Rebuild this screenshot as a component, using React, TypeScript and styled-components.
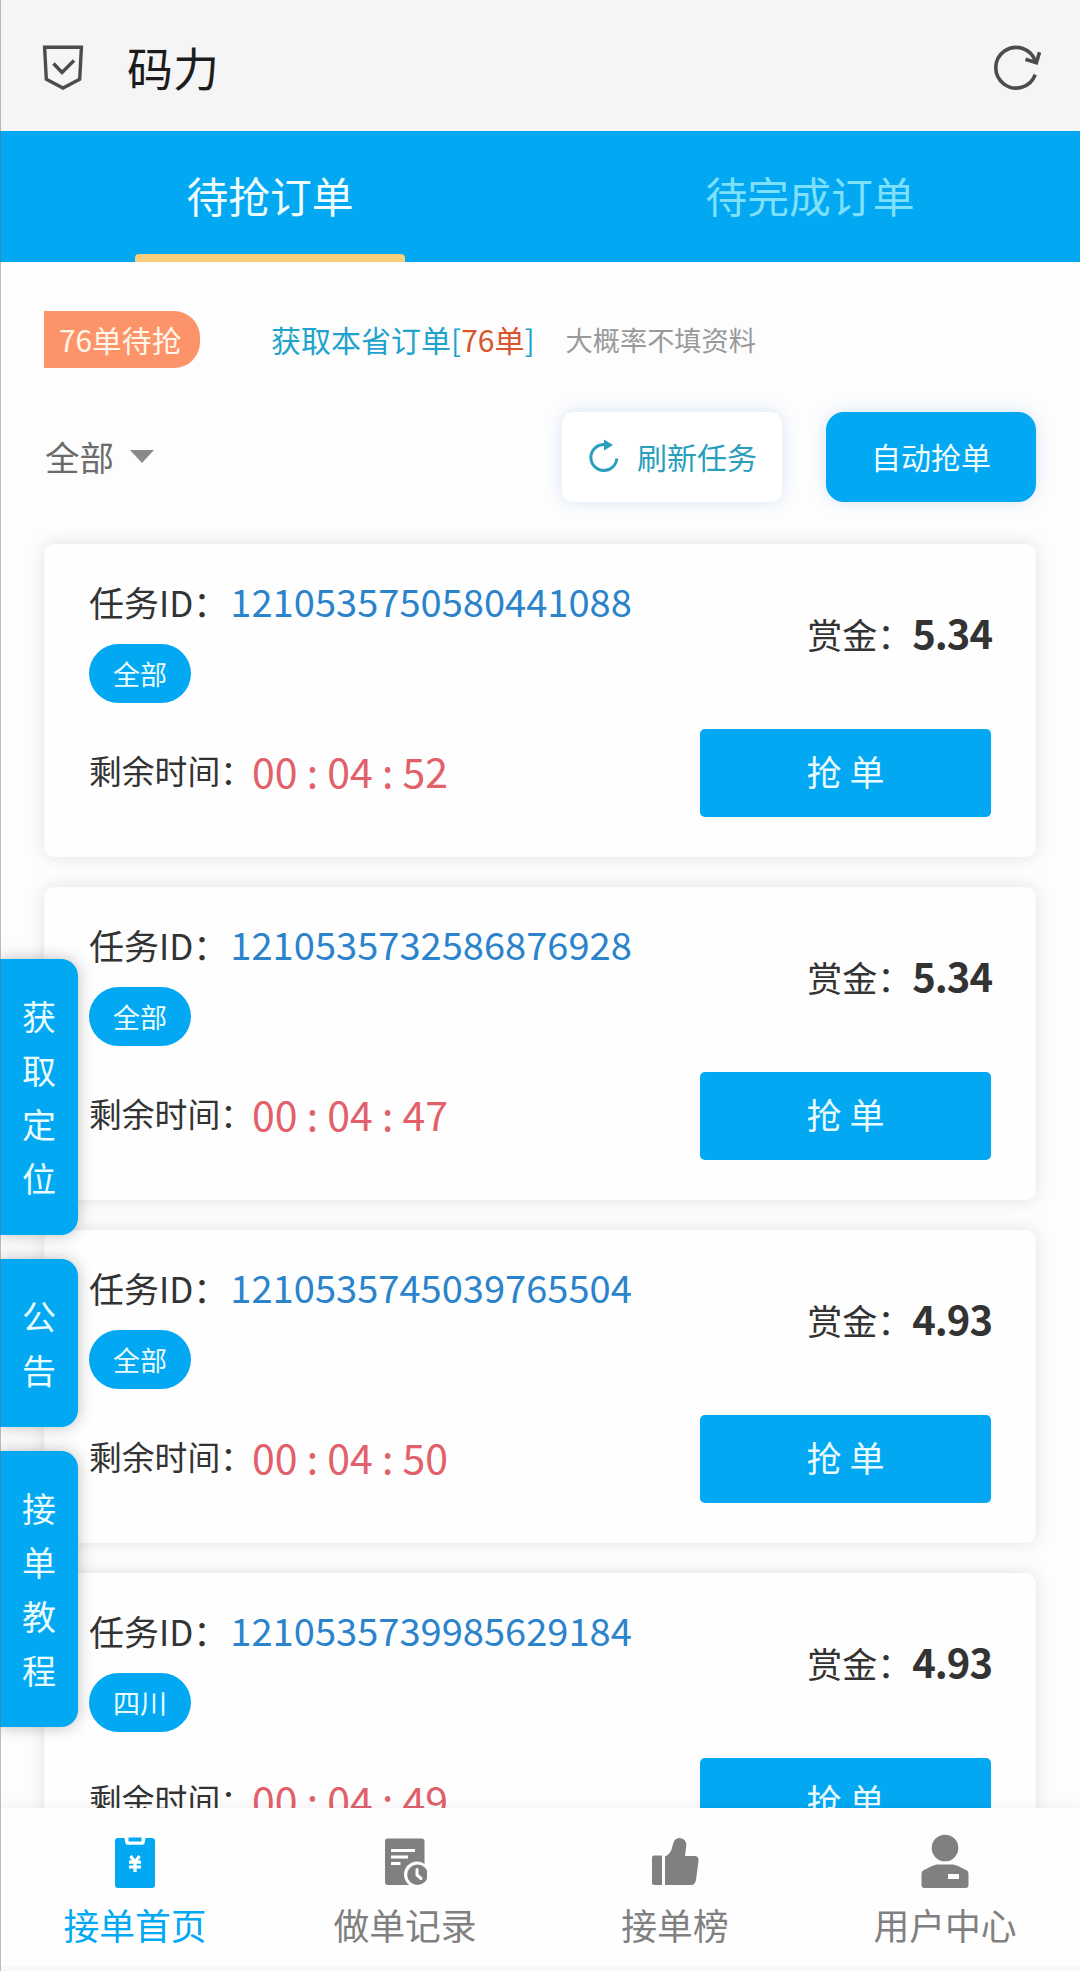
import React from "react";
import styled, { createGlobalStyle } from "styled-components";

const BLUE = "#03a8f3";

const Global = createGlobalStyle`
  *, *::before, *::after { box-sizing: border-box; }
  html, body { margin: 0; padding: 0; }
  body {
    font-family: "Noto Sans CJK SC", "Noto Sans", sans-serif;
    color: #333;
    background: #fdfdfd;
  }
  button { font: inherit; border: 0; margin: 0; padding: 0; cursor: pointer; }
`;

const Screen = styled.div`
  position: relative;
  display: flex;
  flex-direction: column;
  width: 1080px;
  height: 1971px;
  overflow: hidden;
  background: #fdfdfd;

  &::after {
    content: "";
    position: absolute;
    inset: 0 auto 0 0;
    width: 1px;
    background: rgba(110, 110, 110, 0.45);
    z-index: 5;
  }
`;

const Header = styled.header`
  flex: none;
  display: flex;
  align-items: center;
  height: 131px;
  padding: 5px 37px 0 42px;
  background: #f5f5f5;
`;

const Title = styled.h1`
  flex: 1;
  margin: 0 0 5px 43px;
  font-size: 46px;
  line-height: 60px;
  font-weight: 400;
  color: #1c1c1c;
`;

const Tabs = styled.nav`
  flex: none;
  display: flex;
  height: 131px;
  background: ${BLUE};
`;

const Tab = styled.div<{ $active?: boolean }>`
  flex: 1;
  display: flex;
  flex-direction: column;
  align-items: center;
  padding-top: 6px;
  font-size: 41.8px;
  line-height: 117px;
  color: ${(p) => (p.$active ? "#f0fdff" : "#7fe0fb")};

  &::after {
    content: "";
    width: 270px;
    height: 8px;
    border-radius: 4px 4px 0 0;
    background: ${(p) => (p.$active ? "#f9cf7f" : "transparent")};
  }
`;

const Content = styled.main`
  flex: 1;
  min-height: 0;
  overflow: hidden;
  padding: 48px 44px 0;
`;

const Summary = styled.div`
  display: flex;
  align-items: center;
  height: 58px;
`;

const Pending = styled.span`
  width: 156px;
  height: 57px;
  padding-left: 15px;
  border-radius: 0 26px 26px 0;
  background: #fd9469;
  color: #fff6ea;
  font-size: 29.8px;
  line-height: 56px;
  white-space: nowrap;
`;

const Province = styled.span`
  margin-left: 71px;
  font-size: 30px;
  color: #1fa3cd;
  white-space: nowrap;

  em {
    font-style: normal;
    color: #d9562b;
  }
`;

const Hint = styled.span`
  margin-left: 31px;
  font-size: 27.2px;
  color: #999;
  white-space: nowrap;
`;

const Toolbar = styled.div`
  display: flex;
  align-items: center;
  height: 90px;
  margin-top: 44px;
`;

const Filter = styled.div`
  flex: 1;
  display: flex;
  align-items: center;
  gap: 16px;
  padding: 0 0 3px 1px;
  font-size: 34.5px;
  line-height: 50px;
  color: #6b6b6b;
`;

const Caret = styled.i`
  width: 0;
  height: 0;
  margin-top: 2px;
  border: 12px solid transparent;
  border-top: 13px solid #8a8a8a;
  border-bottom: 0;
`;

const ToolButton = styled.button<{ $primary?: boolean }>`
  display: flex;
  align-items: center;
  justify-content: center;
  gap: 18px;
  width: ${(p) => (p.$primary ? 210 : 220)}px;
  height: 90px;
  padding-bottom: 2px;
  padding-left: ${(p) => (p.$primary ? 0 : 2)}px;
  border-radius: ${(p) => (p.$primary ? 18 : 12)}px;
  background: ${(p) => (p.$primary ? BLUE : "#fff")};
  color: ${(p) => (p.$primary ? "#f0fdff" : "#2a9fbd")};
  font-size: 30px;
  box-shadow: 0 0 16px rgba(60, 130, 230, 0.2);

  & + & { margin-left: 44px; }
`;

const List = styled.section`
  display: flex;
  flex-direction: column;
  gap: 30px;
  margin-top: 42px;
`;

const Card = styled.article`
  flex: none;
  display: flex;
  justify-content: space-between;
  height: 313px;
  padding: 28px 45px 0;
  border-radius: 10px;
  background: #fefefe;
  box-shadow: 0 0 18px rgba(0, 0, 0, 0.11);
`;

const Info = styled.div`
  display: flex;
  flex-direction: column;
  align-items: flex-start;
`;

const IdRow = styled.div`
  display: flex;
  align-items: baseline;
  height: 56px;
  font-size: 35px;
  line-height: 57px;
  white-space: nowrap;

  b {
    margin-left: 2px;
    font-weight: 400;
    font-size: 38.1px;
    color: #2b84cb;
  }
`;

const Area = styled.span`
  width: 102px;
  height: 59px;
  margin-top: 16px;
  border-radius: 30px;
  background: ${BLUE};
  color: #e9fcff;
  font-size: 27px;
  line-height: 60px;
  text-align: center;
`;

const TimeRow = styled.div`
  display: flex;
  align-items: center;
  height: 50px;
  margin-top: 42px;
  font-size: 32.8px;
  line-height: 48px;
  white-space: nowrap;

  b {
    margin-left: -1px;
    font-weight: 400;
    font-size: 41px;
    line-height: 50px;
    color: #e2606a;
  }
`;

const Action = styled.div`
  display: flex;
  flex-direction: column;
  align-items: flex-end;
`;

const Price = styled.div`
  display: flex;
  align-items: baseline;
  height: 60px;
  margin: 30px -1px 0 0;
  font-size: 35px;
  line-height: 60px;
  white-space: nowrap;

  b {
    font-weight: 700;
    font-size: 40px;
    letter-spacing: -1px;
  }
`;

const Grab = styled.button`
  width: 291px;
  height: 88px;
  margin-top: 67px;
  border-radius: 5px;
  background: ${BLUE};
  color: #e9fcff;
  font-size: 35px;
  line-height: 83px;
  padding-bottom: 5px;
`;

const Dock = styled.aside`
  position: absolute;
  left: 0;
  top: 959px;
  display: flex;
  flex-direction: column;
  gap: 24px;
`;

const DockItem = styled.div`
  display: flex;
  flex-direction: column;
  align-items: center;
  width: 78px;
  padding: 30px 0;
  border-radius: 0 17px 17px 0;
  background: ${BLUE};
  color: #e9fcff;
  font-size: 34px;
  line-height: 54px;
  box-shadow: 0 0 16px rgba(0, 0, 0, 0.26);
`;

const BottomNav = styled.footer`
  flex: none;
  display: flex;
  height: 163px;
  background: #fefefe;
  box-shadow: 0 0 12px rgba(0, 0, 0, 0.07);
  border-bottom: 5px solid #f8f8f8;
  z-index: 1;
`;

const NavItem = styled.div<{ $active?: boolean }>`
  flex: 1;
  display: flex;
  flex-direction: column;
  align-items: center;
  padding-top: 24px;
  color: ${(p) => (p.$active ? BLUE : "#808080")};
  font-size: 35.8px;
  line-height: 50px;

  svg { display: block; margin-bottom: 9px; }
`;

const ShieldIcon = () => (
  <svg width="42" height="46" viewBox="0 0 42 46" fill="none" stroke="#4c4c4c" strokeWidth="3.4">
    <path d="M2.6 2.3H39.4L37.7 34.2L21 43L4.3 34.2Z" />
    <path d="M11.5 18.5L20 27.5L32 15.5" />
  </svg>
);

const ReloadIcon = () => (
  <svg width="50" height="48" viewBox="0 0 50 48" fill="none" stroke="#4c4c4c" strokeWidth="3.6">
    <path d="M42.2 30.6A20.3 20.3 0 1 1 42.5 17.8" />
    <path d="M32.5 15.2L43.4 18.8L46.5 8.3" />
  </svg>
);

const RefreshIcon = () => (
  <svg width="30" height="34" viewBox="0 0 30 34" fill="none" stroke="#2a9fbd" strokeWidth="3">
    <path d="M27.8 19.5A13 13 0 1 1 15.5 5.5" />
    <path d="M15 0.5L24 6L15 11.5Z" fill="#2a9fbd" stroke="none" />
  </svg>
);

const OrderIcon = () => (
  <svg width="44" height="58" viewBox="0 0 44 58">
    <path fill="currentColor" d="M5 6H11.5L12.3 11Q12.8 12.8 14.5 12.8H29.5Q31.2 12.8 31.7 11L32.500 6H39Q42 6 42 9V53Q42 56 39 56H5Q2 56 2 53V9Q2 6 5 6Z" />
    <path stroke="currentColor" strokeWidth="4" d="M15.500 7.500H28.500" />
    <path fill="none" stroke="#fff" strokeWidth="3.200" d="M17.500 24L22 30L26.500 24M16 30.200H28M16 35H28M22 29V40" />
  </svg>
);

const RecordIcon = () => (
  <svg width="44" height="58" viewBox="0 0 44 58">
    <rect x="2" y="6.5" width="39.5" height="46.5" rx="3" fill="currentColor" />
    <path stroke="#fff" strokeWidth="3" d="M8 18.5H32M8 25H25M8 31.500H17.500" />
    <circle cx="34" cy="42.500" r="13" fill="#fefefe" />
    <circle cx="34.500" cy="42.800" r="10.300" fill="currentColor" />
    <path fill="none" stroke="#fff" strokeWidth="3" strokeLinecap="round" d="M34 37.500V43L38 46.500" />
  </svg>
);

const ThumbIcon = () => (
  <svg width="48" height="58" viewBox="0 0 48 58" fill="currentColor">
    <path d="M3 23.500H11V53H3Q1 53 1 51V25.500Q1 23.500 3 23.500Z" />
    <path d="M14 53V24.500Q20 22 21.500 14L22.500 10.500Q24 6 28.500 6Q35.500 6.500 35.300 14L34 24H44Q48 24.500 47.500 29L45 48Q44 53 40 53Z" />
  </svg>
);

const UserIcon = () => (
  <svg width="48" height="58" viewBox="0 0 48 58">
    <circle cx="24" cy="16" r="13.300" fill="currentColor" />
    <path fill="currentColor" d="M16 32.500H32Q35 32.500 46 38.500Q47.500 39.500 47.500 42V53Q47.500 56 44.500 56H3.500Q.5 56 .5 53V42Q.5 39.500 2 38.500Q13 32.500 16 32.500Z" />
    <rect x="27" y="42" width="11" height="5" fill="#fefefe" />
  </svg>
);

const tasks = [
  { id: "1210535750580441088", area: "全部", time: "00 : 04 : 52", price: "5.34" },
  { id: "1210535732586876928", area: "全部", time: "00 : 04 : 47", price: "5.34" },
  { id: "1210535745039765504", area: "全部", time: "00 : 04 : 50", price: "4.93" },
  { id: "1210535739985629184", area: "四川", time: "00 : 04 : 49", price: "4.93" },
];

const docks = ["获取定位", "公告", "接单教程"];

const navs = [
  { label: "接单首页", Icon: OrderIcon },
  { label: "做单记录", Icon: RecordIcon },
  { label: "接单榜", Icon: ThumbIcon },
  { label: "用户中心", Icon: UserIcon },
];

export default function App() {
  return (
    <>
      <Global />
      <Screen>
        <Header>
          <ShieldIcon />
          <Title>码力</Title>
          <ReloadIcon />
        </Header>
        <Tabs>
          <Tab $active>待抢订单</Tab>
          <Tab>待完成订单</Tab>
        </Tabs>
        <Content>
          <Summary>
            <Pending>76单待抢</Pending>
            <Province>
              获取本省订单[<em>76单</em>]
            </Province>
            <Hint>大概率不填资料</Hint>
          </Summary>
          <Toolbar>
            <Filter>
              全部
              <Caret />
            </Filter>
            <ToolButton>
              <RefreshIcon />
              刷新任务
            </ToolButton>
            <ToolButton $primary>自动抢单</ToolButton>
          </Toolbar>
          <List>
            {tasks.map((t) => (
              <Card key={t.id}>
                <Info>
                  <IdRow>
                    任务ID：<b>{t.id}</b>
                  </IdRow>
                  <Area>{t.area}</Area>
                  <TimeRow>
                    剩余时间：<b>{t.time}</b>
                  </TimeRow>
                </Info>
                <Action>
                  <Price>
                    赏金：<b>{t.price}</b>
                  </Price>
                  <Grab>抢 单</Grab>
                </Action>
              </Card>
            ))}
          </List>
        </Content>
        <BottomNav>
          {navs.map(({ label, Icon }, i) => (
            <NavItem key={label} $active={i === 0}>
              <Icon />
              {label}
            </NavItem>
          ))}
        </BottomNav>
        <Dock>
          {docks.map((d) => (
            <DockItem key={d}>
              {d.split("").map((c) => (
                <span key={c}>{c}</span>
              ))}
            </DockItem>
          ))}
        </Dock>
      </Screen>
    </>
  );
}
